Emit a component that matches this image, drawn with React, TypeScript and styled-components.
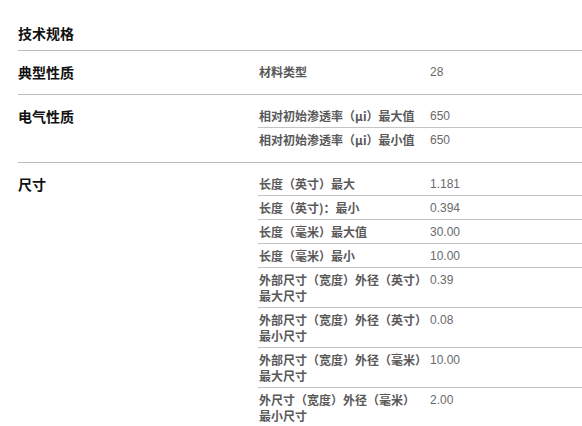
import React from "react";
import styled, { createGlobalStyle } from "styled-components";

const GlobalStyle = createGlobalStyle`
  html, body {
    margin: 0;
    padding: 0;
    background: #ffffff;
    font-family: "Noto Sans CJK SC", "Noto Sans", sans-serif;
    overflow: hidden;
  }
`;

const Page = styled.div`
  padding-left: 18px;
  width: 564px;
`;

const Title = styled.h2`
  margin: 0;
  padding: 23px 0 7px;
  font-size: 14px;
  line-height: 20px;
  font-weight: 700;
  color: #111;
`;

const Section = styled.section`
  display: grid;
  grid-template-columns: 240px 1fr;
  align-items: start;
  border-top: 1px solid #bdbdbd;
  padding: 9px 0 11px;
`;

const Heading = styled.h3`
  margin: 0;
  font-size: 14px;
  line-height: 22px;
  padding-top: 1px;
  font-weight: 700;
  color: #111;
`;

const Rows = styled.div`
  display: flex;
  flex-direction: column;
`;

const Row = styled.div`
  display: grid;
  grid-template-columns: 172px 1fr;
  padding: 4px 0 3px;
  border-bottom: 1px solid #c4c4c4;
  &:last-child {
    border-bottom: none;
  }
`;

const Label = styled.div`
  font-size: 12px;
  line-height: 16px;
  font-weight: 700;
  color: #595959;
  padding-left: 1px;
`;

const LabelLine = styled.span`
  display: block;
  white-space: nowrap;
`;

const Value = styled.div`
  font-family: "Liberation Sans", Arial, sans-serif;
  font-size: 12px;
  line-height: 16px;
  color: #6a6a6a;
`;

type Spec = { label: string[]; value: string };
type Group = { title: string; rows: Spec[] };

const groups: Group[] = [
  { title: "典型性质", rows: [{ label: ["材料类型"], value: "28" }] },
  {
    title: "电气性质",
    rows: [
      { label: ["相对初始渗透率（μi）最大值"], value: "650" },
      { label: ["相对初始渗透率（μi）最小值"], value: "650" },
    ],
  },
  {
    title: "尺寸",
    rows: [
      { label: ["长度（英寸）最大"], value: "1.181" },
      { label: ["长度（英寸)：最小"], value: "0.394" },
      { label: ["长度（毫米）最大值"], value: "30.00" },
      { label: ["长度（毫米）最小"], value: "10.00" },
      { label: ["外部尺寸（宽度）外径（英寸）", "最大尺寸"], value: "0.39" },
      { label: ["外部尺寸（宽度）外径（英寸）", "最小尺寸"], value: "0.08" },
      { label: ["外部尺寸（宽度）外径（毫米）", "最大尺寸"], value: "10.00" },
      { label: ["外尺寸（宽度）外径（毫米）", "最小尺寸"], value: "2.00" },
    ],
  },
];

export default function App() {
  return (
    <>
      <GlobalStyle />
      <Page>
        <Title>技术规格</Title>
        {groups.map((g) => (
          <Section key={g.title}>
            <Heading>{g.title}</Heading>
            <Rows>
              {g.rows.map((r, i) => (
                <Row key={i}>
                  <Label>
                    {r.label.map((l, j) => (
                      <LabelLine key={j}>{l}</LabelLine>
                    ))}
                  </Label>
                  <Value>{r.value}</Value>
                </Row>
              ))}
            </Rows>
          </Section>
        ))}
      </Page>
    </>
  );
}
